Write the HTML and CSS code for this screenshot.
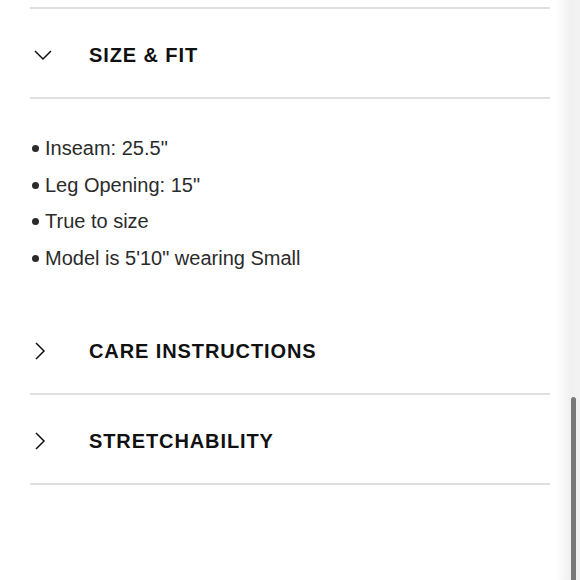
FILE: index.html
```html
<!DOCTYPE html>
<html>
<head>
<meta charset="utf-8">
<link rel="stylesheet" href="styles.css">
</head>
<body>
<div class="page">
  <div class="accordion">
    <div class="item open">
      <div class="head">
        <svg class="chev" width="18" height="12" viewBox="0 0 18 12"><polyline points="1,2 9,10 17,2" fill="none" stroke="#111" stroke-width="1.5"/></svg>
        <span class="title">SIZE &amp; FIT</span>
      </div>
      <ul class="details">
        <li>Inseam: 25.5"</li>
        <li>Leg Opening: 15"</li>
        <li>True to size</li>
        <li>Model is 5'10" wearing Small</li>
      </ul>
    </div>
    <div class="item">
      <div class="head">
        <svg class="chev" width="18" height="18" viewBox="0 0 18 18"><polyline points="2,1 10,9 2,17" fill="none" stroke="#111" stroke-width="1.5"/></svg>
        <span class="title">CARE INSTRUCTIONS</span>
      </div>
    </div>
    <div class="item">
      <div class="head">
        <svg class="chev" width="18" height="18" viewBox="0 0 18 18"><polyline points="2,1 10,9 2,17" fill="none" stroke="#111" stroke-width="1.5"/></svg>
        <span class="title">STRETCHABILITY</span>
      </div>
    </div>
  </div>
</div>
<div class="scrollbar"><div class="thumb"></div></div>
</body>
</html>
```
FILE: styles.css
```css
html, body {
  margin: 0;
  padding: 0;
  background: #fff;
}
body {
  font-family: "Liberation Sans", Arial, sans-serif;
  color: #111;
}
.page {
  padding-top: 7px;
  padding-left: 30px;
  width: 520px;
}
.accordion {
  border-top: 2px solid #e0e0e0;
}
.item {
  border-bottom: 2px solid #e0e0e0;
}
.item.open .head {
  border-bottom: 2px solid #e0e0e0;
}
.item.open {
  border-bottom: none;
}
.head {
  box-sizing: border-box;
  height: 88px;
  padding-top: 5px;
  display: flex;
  align-items: center;
}
.item.open .head {
  height: 90px;
  padding-top: 4px;
}
.chev {
  margin-left: 4px;
  width: 18px;
  flex: none;
}
.title {
  margin-left: 37px;
  font-weight: bold;
  font-size: 20px;
  letter-spacing: 0.9px;
  color: #111;
}
.details {
  list-style: none;
  margin: 0;
  padding: 31px 0 28px 2px;
  font-size: 20px;
  line-height: 36.7px;
  color: #2b2b2b;
}
.details li::before {
  content: "";
  display: inline-block;
  width: 7px;
  height: 7px;
  border-radius: 50%;
  background: #2b2b2b;
  margin-right: 6px;
  vertical-align: 3px;
}
.scrollbar {
  position: fixed;
  top: 0;
  right: 0;
  width: 24px;
  height: 580px;
  background: linear-gradient(to right, #fff, #f0f0f0 60%, #f3f3f3);
}
.thumb {
  position: absolute;
  top: 397px;
  left: 15px;
  width: 5px;
  height: 190px;
  border-radius: 3px;
  background: #7a7a7a;
}
```
